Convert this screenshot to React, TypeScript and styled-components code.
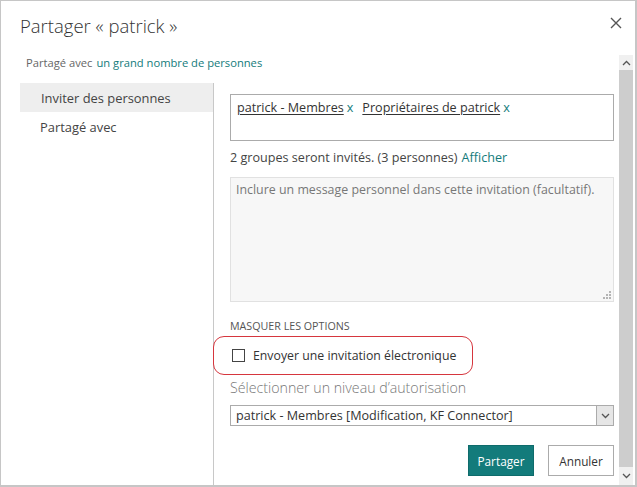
import React, { useState } from 'react';
import styled, { createGlobalStyle } from 'styled-components';

const GlobalStyle = createGlobalStyle`
  html, body {
    margin: 0;
    padding: 0;
    background: #fff;
  }
  body {
    font-family: "Open Sans", "Noto Sans", sans-serif;
    color: #333;
  }
`;

const teal = '#137b7b';

const Dialog = styled.div`
  width: 637px;
  height: 487px;
  box-sizing: border-box;
  border: 1px solid #c6c6c6;
  border-right-width: 2px;
  border-bottom-width: 2px;
  display: flex;
  flex-direction: column;
  background: #fff;
`;

const Header = styled.div`
  height: 54px;
  flex: none;
  display: flex;
  align-items: flex-start;
  justify-content: space-between;
  padding: 12px 12px 0 19px;
  box-sizing: border-box;
`;

const Title = styled.h1`
  margin: 0;
  font-size: 18.5px;
  font-weight: 300;
  color: #333;
`;

const CloseButton = styled.button`
  border: none;
  background: none;
  padding: 0;
  margin-top: 3px;
  width: 14px;
  height: 14px;
  display: flex;
  align-items: center;
  justify-content: center;
  cursor: pointer;
`;

const ScrollArea = styled.div`
  flex: 1;
  display: flex;
  min-height: 0;
`;

const Content = styled.div`
  flex: 1;
  display: flex;
  flex-direction: column;
`;

const SharedWith = styled.div`
  padding-left: 25px;
  height: 28px;
  flex: none;
  line-height: 15px;
  font-size: 11.2px;
  color: #666;
`;

const Link = styled.a`
  color: ${teal};
  text-decoration: none;
  margin-left: 4px;
`;

const Body = styled.div`
  flex: 1;
  display: flex;
  padding-left: 19px;
`;

const Nav = styled.nav`
  width: 193px;
  border-right: 1px solid #c8c8c8;
  display: flex;
  flex-direction: column;
`;

const NavItem = styled.div<{ $active?: boolean }>`
  height: 29px;
  display: flex;
  align-items: center;
  padding-left: ${(p) => (p.$active ? '21px' : '20px')};
  font-size: 12.9px;
  color: #444;
  background: ${(p) => (p.$active ? '#eeeeee' : 'transparent')};
`;

const Panel = styled.div`
  width: 384px;
  padding: 11px 0 0 16px;
  display: flex;
  flex-direction: column;
`;

const Picker = styled.div`
  height: 47px;
  flex: none;
  box-sizing: border-box;
  border: 1px solid #ababab;
  padding: 3px 6px;
  font-size: 12.6px;
  color: #333;
  line-height: 20px;
`;

const Person = styled.span`
  text-decoration: underline;
  text-underline-offset: 2px;
`;

const Remove = styled.span`
  color: ${teal};
  margin: 0 9px 0 3px;
`;

const Status = styled.div`
  margin-top: 7px;
  height: 18px;
  font-size: 12.6px;
  color: #444;
  display: flex;
  align-items: center;
`;

const MessageBox = styled.div`
  position: relative;
  margin-top: 11px;
  height: 125px;
  flex: none;
  box-sizing: border-box;
  border: 1px solid #e1e1e1;
  background: #f7f7f7;
  padding: 3px 5px;
  font-size: 12.4px;
  color: #777;
  line-height: 18px;
`;

const Grip = styled.svg`
  position: absolute;
  right: 2px;
  bottom: 2px;
`;

const OptionsToggle = styled.div`
  margin-top: 16px;
  font-size: 10.7px;
  color: #555;
  text-transform: uppercase;
  height: 16px;
  display: flex;
  align-items: center;
`;

const Highlight = styled.label`
  margin: 2px 0 0 -17px;
  width: 260px;
  height: 39px;
  flex: none;
  box-sizing: border-box;
  border: 1.6px solid #d6363e;
  border-radius: 11px;
  padding-left: 17px;
  display: flex;
  align-items: center;
  gap: 8px;
  font-size: 12.3px;
  color: #333;
  cursor: pointer;
`;

const Checkbox = styled.span`
  width: 13px;
  height: 13px;
  box-sizing: border-box;
  border: 1px solid #444;
  background: #fff;
  display: flex;
  align-items: center;
  justify-content: center;
  margin-left: 1px;
`;

const LevelLabel = styled.div`
  height: 24px;
  display: flex;
  align-items: center;
  font-size: 14.2px;
  font-weight: 300;
  color: #777;
`;

const Select = styled.div`
  margin-top: 6px;
  height: 21px;
  flex: none;
  box-sizing: border-box;
  border: 1px solid #ababab;
  display: flex;
  align-items: center;
  justify-content: space-between;
  font-size: 12.6px;
  color: #333;
  padding-left: 5px;
`;

const SelectArrow = styled.span`
  width: 17px;
  height: 19px;
  box-sizing: border-box;
  border-left: 1px solid #ababab;
  background: #e6e6e6;
  display: flex;
  align-items: center;
  justify-content: center;
`;

const Actions = styled.div`
  margin-top: 19px;
  display: flex;
  justify-content: flex-end;
  gap: 14px;
`;

const Button = styled.button<{ $primary?: boolean }>`
  width: 66px;
  height: 31px;
  box-sizing: border-box;
  font-family: inherit;
  font-size: 11.8px;
  border: 1px solid ${(p) => (p.$primary ? '#0e6b6b' : '#ababab')};
  background: ${(p) => (p.$primary ? teal : '#fff')};
  color: ${(p) => (p.$primary ? '#fff' : '#333')};
  cursor: pointer;
  padding: 0;
`;

const Scrollbar = styled.div`
  width: 14px;
  margin-right: 2px;
  display: flex;
  flex-direction: column;
  background: #f0f0f0;
`;

const ScrollButton = styled.div<{ $h: number }>`
  height: ${(p) => p.$h}px;
  display: flex;
  align-items: center;
  justify-content: center;
`;

const Thumb = styled.div`
  flex: 1;
  background: #cdcdcd;
`;

const Chevron = ({ up }: { up?: boolean }) => (
  <svg width="9" height="6" viewBox="0 0 9 6">
    <polyline
      points={up ? '1,5 4.5,1.5 8,5' : '1,1 4.5,4.5 8,1'}
      fill="none"
      stroke="#555"
      strokeWidth="1.3"
    />
  </svg>
);

const App = () => {
  const [sendEmail, setSendEmail] = useState(false);

  return (
    <>
      <GlobalStyle />
      <Dialog>
        <Header>
          <Title>Partager « patrick »</Title>
          <CloseButton aria-label="Fermer">
            <svg width="12" height="12" viewBox="0 0 12 12">
              <path d="M1 1 L11 11 M11 1 L1 11" stroke="#555" strokeWidth="1.4" />
            </svg>
          </CloseButton>
        </Header>
        <ScrollArea>
          <Content>
            <SharedWith>
              Partagé avec<Link href="#">un grand nombre de personnes</Link>
            </SharedWith>
            <Body>
              <Nav>
                <NavItem $active>Inviter des personnes</NavItem>
                <NavItem>Partagé avec</NavItem>
              </Nav>
              <Panel>
                <Picker>
                  <Person>patrick - Membres</Person>
                  <Remove>x</Remove>
                  <Person>Propriétaires de patrick</Person>
                  <Remove>x</Remove>
                </Picker>
                <Status>
                  2 groupes seront invités. (3 personnes)<Link href="#">Afficher</Link>
                </Status>
                <MessageBox>
                  Inclure un message personnel dans cette invitation (facultatif).
                  <Grip width="8" height="8" viewBox="0 0 8 8">
                    <rect x="6" y="0" width="2" height="2" fill="#b4b4b4" />
                    <rect x="3" y="3" width="2" height="2" fill="#b4b4b4" />
                    <rect x="6" y="3" width="2" height="2" fill="#b4b4b4" />
                    <rect x="0" y="6" width="2" height="2" fill="#b4b4b4" />
                    <rect x="3" y="6" width="2" height="2" fill="#b4b4b4" />
                    <rect x="6" y="6" width="2" height="2" fill="#b4b4b4" />
                  </Grip>
                </MessageBox>
                <OptionsToggle>Masquer les options</OptionsToggle>
                <Highlight onClick={() => setSendEmail(!sendEmail)}>
                  <Checkbox>
                    {sendEmail && (
                      <svg width="9" height="9" viewBox="0 0 9 9">
                        <polyline points="1,4.5 3.5,7 8,1.5" fill="none" stroke="#333" strokeWidth="1.4" />
                      </svg>
                    )}
                  </Checkbox>
                  Envoyer une invitation électronique
                </Highlight>
                <LevelLabel>Sélectionner un niveau d’autorisation</LevelLabel>
                <Select>
                  patrick - Membres [Modification, KF Connector]
                  <SelectArrow>
                    <Chevron />
                  </SelectArrow>
                </Select>
                <Actions>
                  <Button $primary>Partager</Button>
                  <Button>Annuler</Button>
                </Actions>
              </Panel>
            </Body>
          </Content>
          <Scrollbar>
            <ScrollButton $h={15}>
              <Chevron up />
            </ScrollButton>
            <Thumb />
            <ScrollButton $h={18}>
              <Chevron />
            </ScrollButton>
          </Scrollbar>
        </ScrollArea>
      </Dialog>
    </>
  );
};

export default App;
